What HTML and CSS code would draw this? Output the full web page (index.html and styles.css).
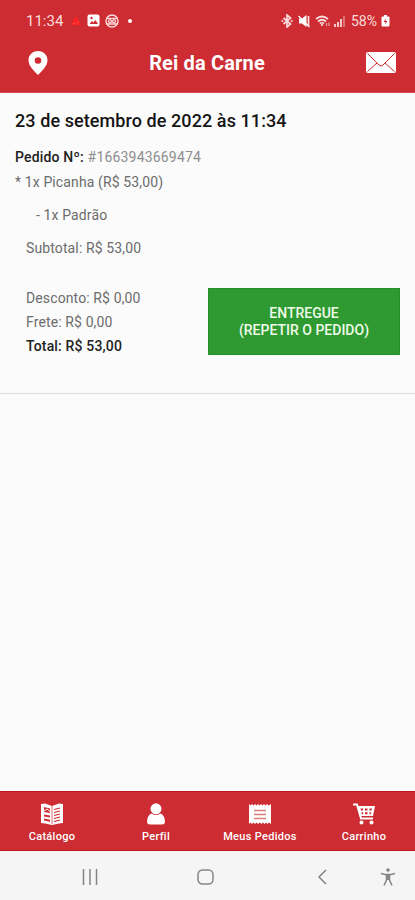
FILE: index.html
```html
<!DOCTYPE html>
<html lang="pt-BR">
<head>
    <meta charset="UTF-8">
    <title>Rei da Carne</title>
    <link rel="stylesheet" href="styles.css">
</head>
<body>
    <div class="app">
        <header class="top">
            <div class="status">
                <span class="clock">11:34</span>
                <svg class="alert" width="12" height="12" viewBox="0 0 12 12"><path d="M6 1l2.500 4h-5zM3 5.500h6L11 10H1z" fill="#ff1f1f"/><path d="M3 8.300h1.500M7 7h1.500M6 9h1" stroke="#e07078"/></svg>
                <svg class="photo" width="13" height="13" viewBox="0 0 13 13"><rect x=".5" y=".5" width="12" height="12" rx="2" fill="#fff"/><path d="M2.500 10l2.500-3 1.500 1.500L8.500 6l2.500 4z" fill="#cc2c32"/><circle cx="4.500" cy="4" r="1.200" fill="#cc2c32"/></svg>
                <svg class="badge" width="14" height="14" viewBox="0 0 14 14" fill="none" stroke="#fbdcdc"><circle cx="7" cy="7" r="6" stroke-width="1.400"/><path d="M2 4.300h10M2 10h10" stroke-width="1.300"/><circle cx="5" cy="7.200" r="1.500" stroke-width="1.300"/><circle cx="9" cy="7.200" r="1.500" stroke-width="1.300"/></svg>
                <span class="dot"></span>
                <div class="status-right">
                    <svg width="12" height="14" viewBox="0 0 12 14" fill="none" stroke="#fbdcdc" stroke-width="1.700"><path d="M2.500 4l7 6L6 13V1l3.500 3-7 6"/><path d="M.3 7h2M9.700 7h2"/></svg>
                    <svg class="mute" width="13" height="14" viewBox="0 0 13 14"><path d="M1 4.500h3L8.500 1v12L4 9.500H1z" fill="#fff"/><path d="M10.500 2v10" stroke="#fbdcdc" stroke-width="1.700"/><path d="M.5 2l11 11" stroke="#fff" stroke-width="1.300"/></svg>
                    <svg class="wifi" width="17" height="14" viewBox="0 0 17 14" fill="none" stroke="#fbdcdc" stroke-width="1.700"><path d="M1 5q6-5 12 0M3 7.500q4-3.500 8 0M5 9.500q2-1.500 4 0"/><path d="M7 10v2"/><path d="M11.500 12V9M14 8.500V12" stroke="#e59a9d" stroke-width="1.300"/></svg>
                    <svg class="signal" width="12" height="12" viewBox="0 0 12 12"><path d="M0 9h2v3H0zM3 7h2v5H3zM6 4h2v8H6z" fill="#f6c8ca"/><path d="M9 1h2v11H9z" fill="#dd7478"/></svg>
                    <span class="percent">58%</span>
                    <svg class="battery" width="9" height="12" viewBox="0 0 9 12"><path d="M3 0h3v1.500h1.500q1 0 1 1v8q0 1-1 1h-6q-1 0-1-1v-8q0-1 1-1H3z" fill="#fff"/><path d="M5 3.500L2.500 7h2L4 9.500 6.500 6h-2z" fill="#cc2c32"/></svg>
                </div>
            </div>
            <div class="title-bar">
                <svg width="20" height="24" viewBox="0 0 20 24"><path d="M10 0C4.500 0 .5 4 .5 9.300.5 15 6 20 10 24c4-4 9.500-9 9.500-14.700C19.500 4 15.500 0 10 0zm0 6.200a3.300 3.300 0 1 1 0 6.600 3.300 3.300 0 0 1 0-6.600z" fill="#fff" fill-rule="evenodd"/></svg>
                <h1>Rei da Carne</h1>
                <svg width="30" height="21" viewBox="0 0 30 21"><rect width="30" height="21" rx="2" fill="#fff"/><path d="M1.500 1.500L13 13q2 2 4 0L28.500 1.500M1.500 19.500L11 11M28.500 19.500L19 11" fill="none" stroke="#cc2c32" stroke-width="1"/></svg>
            </div>
        </header>

        <main>
            <div class="order">
                <h2>23 de setembro de 2022 às 11:34</h2>
                <p class="number"><b>Pedido Nº:</b> <span>#1663943669474</span></p>
                <p>* 1x Picanha (R$ 53,00)</p>
                <p class="option">- 1x Padrão</p>
                <p class="subtotal">Subtotal: R$ 53,00</p>
                <div class="summary">
                    <div class="values">
                        <p>Desconto: R$ 0,00</p>
                        <p>Frete: R$ 0,00</p>
                        <p class="total">Total: R$ 53,00</p>
                    </div>
                    <button class="btn">ENTREGUE<br>(REPETIR O PEDIDO)</button>
                </div>
            </div>
        </main>

        <nav class="tabs">
            <a class="tab">
                <svg width="24" height="22" viewBox="0 0 24 22"><path d="M1 1l4-.5L12 3l7-2.500 4 .5v19l-4 .5-7 1.500-7-1.500-4-.5z" fill="#fff"/><path d="M4 4l6 1.500V10L4 9zM4 11.500l6 1v2l-6-1zM4 15.500l6 1.200v2L4 17.500z" fill="#cc2c32"/><path d="M4 8l3-2 3 2.500" fill="none" stroke="#fff"/><path d="M12 3v18" stroke="#cc2c32" stroke-width=".7"/><path d="M14 6.500l6-1.500M14 9.500l6-1.500M14 12.500l6-1.500M14 15.500l6-1.500M14 18.500l6-1.500" stroke="#cc2c32" stroke-width="1.200"/></svg>
                <span>Catálogo</span>
            </a>
            <a class="tab">
                <svg width="20" height="22" viewBox="0 0 20 22"><circle cx="10" cy="5.800" r="5.500" fill="#fff"/><path d="M5.500 10.500q4.500 3 9 0 4 1.500 4.500 7.500 0 3.500-3 3.500H4q-3 0-3-3.500.5-6 4.500-7.500z" fill="#fff"/></svg>
                <span>Perfil</span>
            </a>
            <a class="tab">
                <svg width="22" height="22" viewBox="0 0 22 22"><path d="M0 1l1.500 1.500L3 1l1.500 1.500L6 1l1.500 1.500L9 1l1.500 1.500L12 1l1.500 1.500L15 1l1.500 1.500L18 1l1.500 1.500L22 1v20l-2-1.500-1.500 1.500-1.500-1.500-1.500 1.500-1.500-1.500-1.500 1.500-1.500-1.500L9 21l-1.500-1.500L6 21l-1.500-1.500L3 21l-1.500-1.500L0 21z" fill="#fff"/><path d="M5 7.500h12M5 11.500h12M5 15.500h12" stroke="#db7d78" stroke-width="1.500"/></svg>
                <span>Meus Pedidos</span>
            </a>
            <a class="tab">
                <svg width="24" height="22" viewBox="0 0 24 22"><path d="M1 1.500h4l4 14h12" fill="none" stroke="#fff" stroke-width="2"/><path d="M5 3h18l-2 10H8z" fill="#fff"/><path d="M8.500 5.500h2.700v2H9zM13 5.500h2.500v2H13zM17.500 5.500H20l-.4 2h-2.100zM9.500 9.300h1.700v2h-1.200zM13 9.300h2.500v2H13zM17.500 9.300h1.700l-.4 2h-1.300z" fill="#cc2c32"/><circle cx="9.500" cy="19.500" r="2" fill="#fff"/><circle cx="19.500" cy="19.500" r="2" fill="#fff"/></svg>
                <span>Carrinho</span>
            </a>
        </nav>

        <!-- Android navigation buttons -->
        <div class="system">
            <svg width="16" height="16" viewBox="0 0 16 16" stroke="#858585" stroke-width="1.500"><path d="M1.500 0v16M8 0v16M14.500 0v16"/></svg>
            <svg class="home" width="17" height="16" viewBox="0 0 17 16"><rect x="1" y="1" width="15" height="14" rx="4.500" fill="none" stroke="#858585" stroke-width="1.500"/></svg>
            <svg class="back" width="10" height="16" viewBox="0 0 10 16"><path d="M9 1L2 8l7 7" fill="none" stroke="#858585" stroke-width="1.500"/></svg>
            <svg class="person" width="16" height="18" viewBox="0 0 16 18" fill="none" stroke="#858585" stroke-width="1.500"><circle cx="8" cy="2" r="1.800" fill="#858585" stroke="none"/><path d="M1 5.500l5 1.200h4l5-1.200"/><path d="M6.500 6.500h3V12l2.500 5.500M6.500 6.500V12L4 17.500"/><path d="M8 6v6" stroke-width="2.500"/></svg>
        </div>
    </div>
</body>
</html>
```
FILE: styles.css
```css
* {
    box-sizing: border-box;
}

body {
    margin: 0;
    font-family: Roboto, "Liberation Sans", sans-serif;
    background-color: #fbfbfb;
}

h1, h2, p {
    margin: 0;
}

svg {
    display: block;
    flex-shrink: 0;
}

.app {
    display: flex;
    flex-direction: column;
    width: 415px;
    height: 900px;
}

/* Header */
.top {
    height: 93px;
    background-color: #cc2c32;
    border-bottom: 1px solid #d94a54;
    color: #fff;
}

.status {
    display: flex;
    align-items: center;
    height: 41px;
    padding: 0 25px 0 26px;
    font-size: 15px;
    color: #fbdcdc;
}

.clock {
    width: 38px;
}

.alert {
    margin-left: 6px;
}

.photo {
    margin-left: 5px;
}

.badge {
    margin-left: 5px;
}

.dot {
    width: 4px;
    height: 4px;
    margin-left: 9px;
    border-radius: 50%;
    background-color: #fff;
}

.status-right {
    display: flex;
    align-items: center;
    margin-left: auto;
}

.mute {
    margin-left: 5px;
}

.wifi {
    margin-left: 4px;
}

.signal {
    margin-left: 2px;
}

.percent {
    width: 29px;
    margin-left: 5px;
    font-size: 14px;
}

.battery {
    margin-left: 1px;
}

.title-bar {
    display: flex;
    justify-content: space-between;
    align-items: center;
    height: 43px;
    padding: 0 19px 0 28px;
}

h1 {
    font-size: 20px;
    font-weight: 700;
    letter-spacing: 0.15px;
}

/* Order */
main {
    flex: 1;
}

.order {
    height: 301px;
    padding: 16px 15px 0;
    border-bottom: 1px solid #dcdcdc;
    color: #6c6c6c;
    font-size: 14px;
    line-height: 24px;
    letter-spacing: 0.12px;
}

h2 {
    height: 36px;
    color: #151515;
    font-size: 18px;
    font-weight: 500;
    line-height: 24px;
    letter-spacing: 0.08px;
}

.number {
    height: 25px;
    letter-spacing: 0.18px;
}

.number b {
    color: #222;
    font-weight: 500;
}

.number span {
    color: #8e8e8e;
}

.option {
    margin-top: 9px;
    padding-left: 21px;
}

.subtotal {
    margin-top: 9px;
    padding-left: 11px;
}

.summary {
    display: flex;
    justify-content: space-between;
    margin-top: 26px;
}

.values {
    padding-left: 11px;
}

.total {
    color: #222;
    font-weight: 500;
    letter-spacing: 0.16px;
}

.btn {
    width: 192px;
    height: 67px;
    margin-top: 2px;
    padding: 0;
    border: 1px solid #259027;
    background-color: #309a32;
    color: #effbe9;
    font-family: inherit;
    font-size: 14px;
    font-weight: 500;
    line-height: 17px;
}

/* Bottom tabs */
.tabs {
    display: grid;
    grid-template-columns: repeat(4, 104px);
    height: 60px;
    background-color: #cc2c32;
    border-top: 1px solid #bd1820;
    border-bottom: 1px solid #bd1820;
}

.tab {
    display: flex;
    flex-direction: column;
    align-items: center;
    padding-top: 11px;
    color: #fff;
    font-size: 11px;
    font-weight: 500;
    line-height: 14px;
    letter-spacing: 0.3px;
}

.tab span {
    margin-top: 5px;
}

.system {
    display: flex;
    align-items: center;
    height: 49px;
    padding: 3px 19px 0 82px;
    background-color: #f5f5f5;
}

.home {
    margin-left: 99px;
}

.back {
    margin-left: 103px;
}

.person {
    margin-left: auto;
}
```
